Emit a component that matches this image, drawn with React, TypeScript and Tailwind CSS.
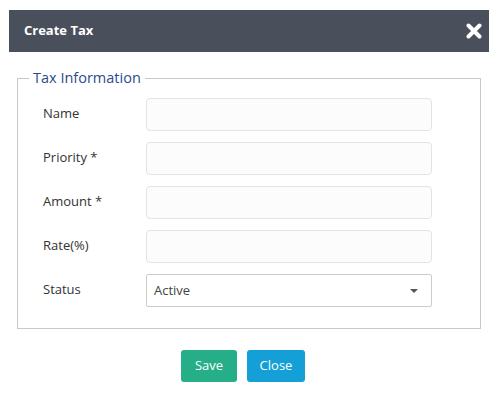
const fields = ['Name', 'Priority *', 'Amount *', 'Rate(%)'];

export default function App() {
  return (
    <div className="w-[498px] h-[412px] bg-white p-[9px] pt-[10px] font-['Open_Sans',sans-serif]">
      {/* Header */}
      <div className="h-[42px] bg-[#4a505b] flex items-center justify-between pl-[15px] pr-[7px]">
        <span className="text-white text-[13px] font-bold">Create Tax</span>
        <svg width="16" height="16" viewBox="0 0 16 16">
          <path d="M2.5 2.5L13.5 13.5M13.5 2.5L2.5 13.5" stroke="#fff" strokeWidth="4" strokeLinecap="round" />
        </svg>
      </div>

      {/* Body */}
      <div className="px-[8px] pt-[16px]">
        <fieldset className="border border-[#c8c8c8] pl-[25px] pr-[48px] h-[261px]">
          <legend className="text-[#2c4a8c] text-[14.5px] px-[4px] ml-[-14px] leading-[20px]">Tax Information</legend>
          <div className="flex flex-col gap-[11px] mt-[10px]">
            {fields.map((f) => (
              <div key={f} className="flex items-center">
                <label className="w-[103px] text-[13px] text-[#333] -mt-[1px]">{f}</label>
                <div className="flex-1 h-[33px] border border-[#e3e3e3] bg-[#fcfcfc] rounded-[4px]" />
              </div>
            ))}
            <div className="flex items-center">
              <label className="w-[103px] text-[13px] text-[#333] -mt-[1px]">Status</label>
              <div className="flex-1 h-[33px] border border-[#cccccc] bg-white rounded-[2px] flex items-center justify-between pl-[7px] pr-[13px]">
                <span className="text-[13px] text-[#444]">Active</span>
                <svg width="8" height="4" viewBox="0 0 8 4">
                  <path d="M0 0h8L4 4z" fill="#555" />
                </svg>
              </div>
            </div>
          </div>
        </fieldset>

        <div className="flex justify-center gap-[10px] mt-[21px] pr-[12px]">
          <button className="h-[32px] w-[56px] bg-[#26ae88] text-white text-[13px] rounded-[3px]">Save</button>
          <button className="h-[32px] w-[58px] bg-[#14a0d6] text-white text-[13px] rounded-[3px]">Close</button>
        </div>
      </div>
    </div>
  );
}
